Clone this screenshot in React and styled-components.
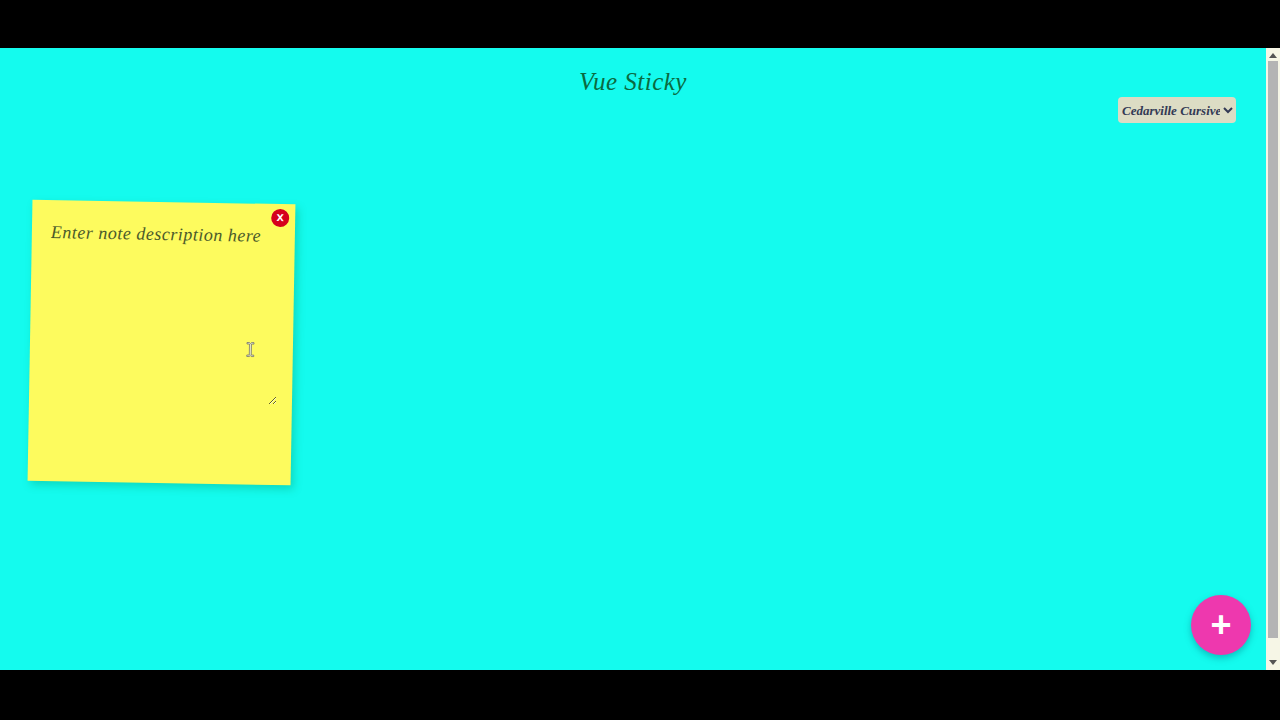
import React from 'react';
import styled, { createGlobalStyle } from 'styled-components';

const GlobalStyle = createGlobalStyle`
    html, body {
        margin: 0;
        padding: 0;
        height: 100%;
        overflow: hidden;
        background: #000;
    }
    #root {
        height: 100%;
    }
`;

const script = `cursive, "Liberation Serif", serif`;

export default function App() {
    return <Screen>
        <GlobalStyle />
        <Letterbox $height={48} />
        <Viewport>
            <Board>
                <Title>Vue Sticky</Title>
                <Toolbar>
                    <FontSelect defaultValue="Cedarville Cursive">
                        <option>Cedarville Cursive</option>
                    </FontSelect>
                </Toolbar>
                <Notes>
                    <Note>
                        <CloseButton>x</CloseButton>
                        <NoteText placeholder="Enter note description here" />
                        <TextCursor viewBox="0 0 9 16">
                            <path d="M1 1h2.5l1 1 1-1H8v1.5H5.5v11H8V15H5.5l-1-1-1 1H1v-1.5h2.5v-11H1z" fill="#e8e8c8" stroke="#666" strokeWidth=".7" />
                        </TextCursor>
                    </Note>
                </Notes>
                <AddButton>+</AddButton>
            </Board>
            <Scrollbar>
                <Arrow viewBox="0 0 8 5"><path d="M4 0 8 5H0z" /></Arrow>
                <Thumb />
                <Arrow viewBox="0 0 8 5"><path d="M0 0h8L4 5z" /></Arrow>
            </Scrollbar>
        </Viewport>
        <Letterbox $height={50} />
    </Screen>;
}

const Screen = styled.div`
    height: 720px;
    display: flex;
    flex-direction: column;
    background: #000;
`;
const Letterbox = styled.div`
    height: ${(p) => p.$height}px;
    flex: none;
    background: #000;
`;
const Viewport = styled.div`
    flex: 1;
    display: flex;
    min-height: 0;
`;
const Board = styled.main`
    flex: 1;
    position: relative;
    background: #14fbee;
    display: flex;
    flex-direction: column;
`;
const Title = styled.h1`
    margin: 18px 0 0;
    height: 31px;
    text-align: center;
    font: italic 400 25px/31px ${script};
    letter-spacing: 0.5px;
    color: #0a6a40;
`;
const Toolbar = styled.div`
    display: flex;
    justify-content: flex-end;
    padding: 0 30px;
`;
const FontSelect = styled.select`
    width: 118px;
    height: 26px;
    padding: 0;
    border: none;
    border-radius: 4px;
    background: #dcdcc4;
    color: #333a55;
    font: italic 700 13px ${script};
`;
const Notes = styled.div`
    display: flex;
    padding: 79px 0 0 30px;
`;
const Note = styled.article`
    position: relative;
    width: 263px;
    height: 281px;
    box-sizing: border-box;
    padding: 20px 16px 0 19px;
    background: #fdfb5e;
    box-shadow: 3px 4px 8px rgba(0, 130, 70, 0.28);
    transform: rotate(1deg);
`;
const NoteText = styled.textarea`
    display: block;
    width: 229px;
    height: 181px;
    padding: 0;
    border: none;
    outline: none;
    background: transparent;
    font: italic 400 18px/24px ${script};
    letter-spacing: 0.5px;
    color: #4b5a2a;
    &::placeholder {
        color: #4b5a2a;
        opacity: 1;
    }
`;
const CloseButton = styled.button`
    position: absolute;
    top: 5px;
    right: 6px;
    width: 18px;
    height: 18px;
    padding: 0 0 2px;
    border: none;
    border-radius: 50%;
    background: #d5001c;
    color: #fff;
    font: 700 13px/14px "Liberation Sans", sans-serif;
`;
const TextCursor = styled.svg`
    position: absolute;
    left: 216px;
    top: 138px;
    width: 9px;
    height: 16px;
`;
const AddButton = styled.button`
    position: absolute;
    right: 15px;
    bottom: 15px;
    width: 60px;
    height: 60px;
    padding: 0;
    border: none;
    border-radius: 50%;
    background: #ee38ae;
    color: #fff;
    font: 700 36px/1 "Liberation Sans", sans-serif;
    box-shadow: 0 3px 7px rgba(0, 90, 110, 0.38);
`;
const Scrollbar = styled.div`
    width: 14px;
    flex: none;
    background: #f6f6e6;
    display: flex;
    flex-direction: column;
    align-items: center;
    justify-content: space-between;
    padding: 5px 0;
    box-sizing: border-box;
`;
const Arrow = styled.svg`
    width: 8px;
    height: 5px;
    fill: #555;
`;
const Thumb = styled.div`
    width: 10px;
    height: 577px;
    background: #b4b4b4;
    margin-bottom: 19px;
`;
